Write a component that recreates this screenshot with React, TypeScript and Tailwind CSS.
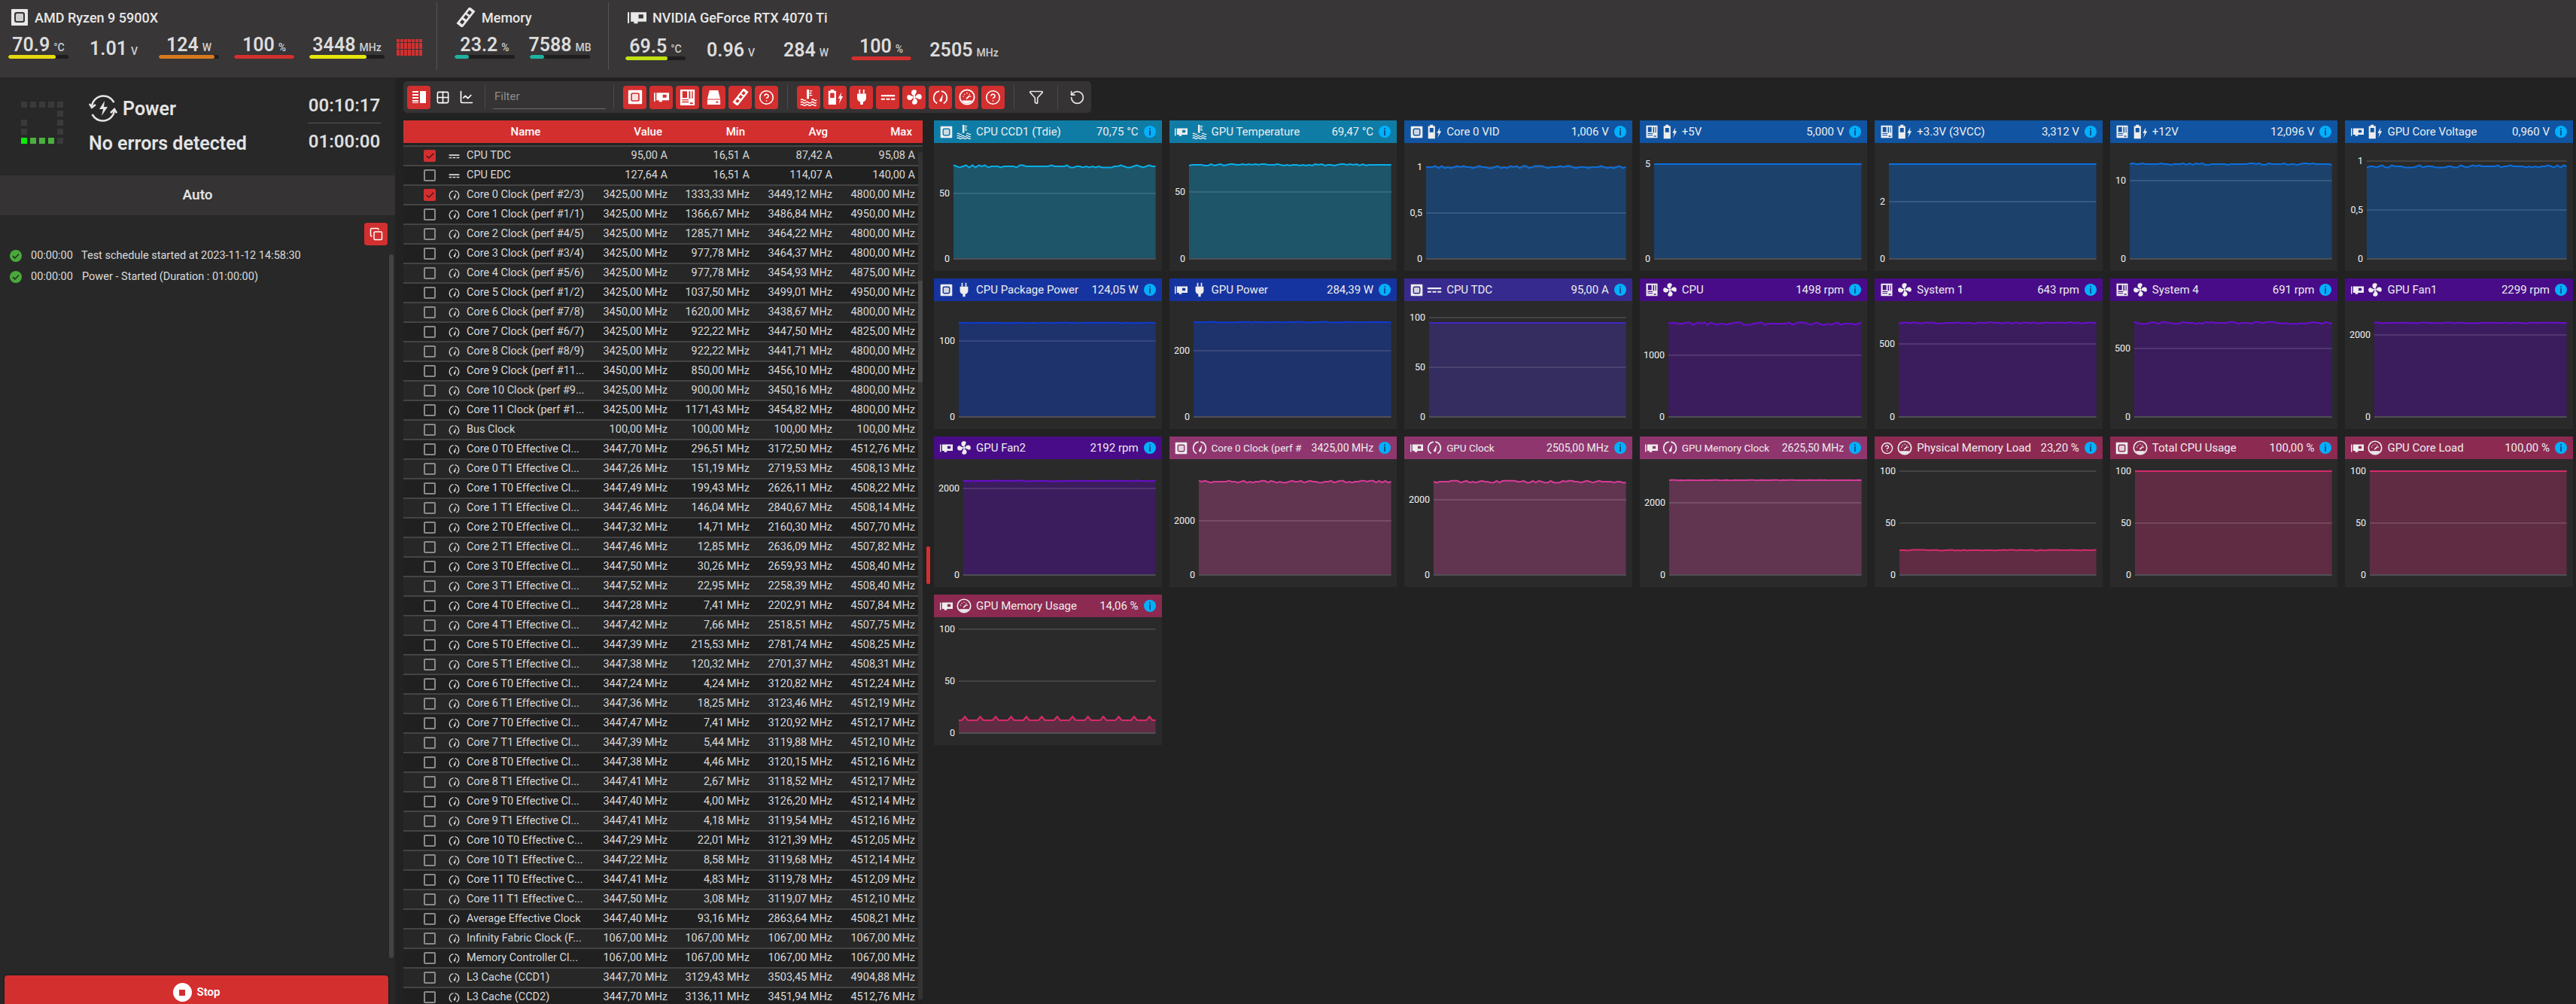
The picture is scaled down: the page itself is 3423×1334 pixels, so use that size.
import { Check, ChartLine, CircleHelp, Copy, Filter, Grid2x2, RotateCcw } from "lucide-react";

type IconProps = { size?: number; className?: string };

function CpuIcon({ size = 16, className }: IconProps) {
  return (
    <svg viewBox="0 0 24 24" width={size} height={size} className={className} fill="currentColor">
      <path fillRule="evenodd" d="M2 1h20a1 1 0 0 1 1 1v20a1 1 0 0 1-1 1H2a1 1 0 0 1-1-1V2a1 1 0 0 1 1-1zM8 5h8a3 3 0 0 1 3 3v8a3 3 0 0 1-3 3H8a3 3 0 0 1-3-3V8a3 3 0 0 1 3-3z" />
      <rect x="7" y="7" width="10" height="10" rx="1.5" opacity="0.85" />
    </svg>
  );
}

function GpuIcon({ size = 16, className }: IconProps) {
  return (
    <svg viewBox="0 0 24 24" width={size} height={size} className={className} fill="currentColor">
      <rect x="0" y="5" width="2" height="14" />
      <path fillRule="evenodd" d="M4 5h20v12h-11v2.500h-5v-2.500h-4zM14 8v5h6v-5z" />
    </svg>
  );
}

function MoboIcon({ size = 16, className }: IconProps) {
  return (
    <svg viewBox="0 0 24 24" width={size} height={size} className={className} fill="currentColor">
      <path fillRule="evenodd" d="M2 1h20v22H2zM5 3.500v9h6.500v-9zM14 3.500v10h2v-10zM18 3.500v10h1.500v-10zM4.500 14.500v1.500h9v-1.500zM4.500 17.500v1.500h9v-1.500zM15.500 19v2h4v-2z" />
    </svg>
  );
}

function DriveIcon({ size = 16, className }: IconProps) {
  return (
    <svg viewBox="0 0 24 24" width={size} height={size} className={className} fill="currentColor">
      <path d="M6 2h12l3 12H3z" />
      <path fillRule="evenodd" d="M3 15h18v7H3zM15 17.500v2h3v-2z" />
    </svg>
  );
}

function RamIcon({ size = 16, className }: IconProps) {
  return (
    <svg viewBox="0 0 24 24" width={size} height={size} className={className} fill="currentColor">
      <g transform="rotate(38 12 12)">
        <path fillRule="evenodd" d="M7.500-1h9v26h-9zM10 2.500v4.500h4v-4.500zM10 9.500v4.500h4v-4.500zM10 17v4.500h4V17z" />
      </g>
    </svg>
  );
}

function ThermoIcon({ size = 20, className }: IconProps) {
  return (
    <svg viewBox="0 0 24 24" width={size} height={size} className={className} fill="none" stroke="currentColor">
      <path d="M11 1v13" strokeWidth="3" />
      <path d="M13 3h4M13 6h3M13 9h4" strokeWidth="1.500" />
      <path d="M1 15.500q1.800-1.800 3.600 0t3.600 0M15.800 15.500q1.800-1.800 3.600 0t3.600 0" strokeWidth="1.500" />
      <path d="M1 19q1.800-1.800 3.600 0t3.600 0 3.600 0 3.600 0 3.600 0 3.600 0M1 22.500q1.800-1.800 3.600 0t3.600 0 3.600 0 3.600 0 3.600 0 3.600 0" strokeWidth="1.500" />
    </svg>
  );
}

function BatteryBoltIcon({ size = 20, className }: IconProps) {
  return (
    <svg viewBox="0 0 24 24" width={size} height={size} className={className} fill="currentColor">
      <path fillRule="evenodd" d="M5 1h5v2h3v20H2V3h3zM4.500 6v7h6V6z" />
      <path d="M21 5l-5 9h3l-2 8 6-11h-3z" />
    </svg>
  );
}

function PlugIcon({ size = 20, className }: IconProps) {
  return (
    <svg viewBox="0 0 24 24" width={size} height={size} className={className} fill="currentColor">
      <path d="M8 1h2v6H8zM14 1h2v6h-2z" />
      <path d="M5.500 7h13v7a6 6 0 0 1-4.500 5v4h-4v-4a6 6 0 0 1-4.500-5z" />
    </svg>
  );
}

function DcIcon({ size = 20, className }: IconProps) {
  return (
    <svg viewBox="0 0 24 24" width={size} height={size} className={className} fill="currentColor">
      <path d="M1 8.500h22v2.500H1zM1 14h6v2.500H1zM9 14h6v2.500H9zM17 14h6v2.500h-6z" />
    </svg>
  );
}

function FanIcon({ size = 20, className }: IconProps) {
  return (
    <svg viewBox="0 0 24 24" width={size} height={size} className={className} fill="currentColor">
      {[0, 90, 180, 270].map((deg) => (
        <path key={deg} transform={`rotate(${deg} 12 12)`} d="M11.500 10c-3-.5-4.500-3.500-3.500-6.500 1-2.500 6-3 7-.5s-1.500 3.500-2 7z" />
      ))}
      <circle cx="12" cy="12" r="2" />
    </svg>
  );
}

function ClockIcon({ size = 20, className }: IconProps) {
  return (
    <svg viewBox="0 0 24 24" width={size} height={size} className={className} fill="none" stroke="currentColor">
      <path d="M7 21a10 10 0 0 1 3.500-18.500M13.500 2.500A10 10 0 0 1 17 21" strokeWidth="2" />
      <path d="M10.500 16.500L16 7l-1.500 10.500a2.200 2.200 0 0 1-4-1z" fill="currentColor" stroke="none" />
    </svg>
  );
}

function LoadIcon({ size = 20, className }: IconProps) {
  return (
    <svg viewBox="0 0 24 24" width={size} height={size} className={className} fill="none" stroke="currentColor">
      <circle cx="12" cy="12" r="10.500" strokeWidth="2" />
      <path d="M4.500 17h15a8.500 8.500 0 0 1-15 0z" fill="currentColor" stroke="none" />
      <path d="M6 11h1.500M8 7.500l1 1M12 5.500v1.500M16 7.500l-1 1M16.500 11H18" strokeWidth="1.500" />
      <path d="M11 14.500L16 10" strokeWidth="2" />
    </svg>
  );
}

function InfoDot() {
  return (
    <svg viewBox="0 0 16 16" width={16} height={16} className="shrink-0">
      <circle cx="8" cy="8" r="8" fill="#03b0fb" />
      <rect x="7.100" y="3" width="1.800" height="1.800" fill="#0b4a8a" />
      <rect x="7.100" y="6" width="1.800" height="7" fill="#0b4a8a" />
    </svg>
  );
}

function CycleBoltIcon() {
  return (
    <svg viewBox="0 0 38 38" width={38} height={38} fill="none" stroke="#e4e4e4" strokeWidth="2.500" className="shrink-0">
      <path d="M4 18C4 9 11 2.500 19.500 2.500c6 0 11 3.500 14 8.500" />
      <path d="M34 20c0 9-7 15.500-15.500 15.500-6 0-11-3.500-14-8.500" />
      <path d="M1 13l3 5 5-4M29 25l5-5 3 5" />
      <path d="M21 9l-7 11h5l-2 9 8-12h-5z" fill="#e4e4e4" stroke="none" />
    </svg>
  );
}

function PanelsIcon() {
  return (
    <svg viewBox="0 0 20 20" width={20} height={20} fill="#fff">
      <path d="M1 2h8v2H1zM1 6h8v2H1zM1 10h8v2H1zM1 14h8v2H1zM1 18h8v-1H1zM11 2h8v16h-8z" />
    </svg>
  );
}

function StatusOk() {
  return (
    <svg viewBox="0 0 16 16" width={16} height={16} className="shrink-0">
      <circle cx="8" cy="8" r="8" fill="#4aa83c" />
      <path d="M4 8.200l2.800 2.800L12 5.500" fill="none" stroke="#26381f" strokeWidth="1.800" />
    </svg>
  );
}

const RED = "bg-[#d32f2f]";

function Metric({ value, unit, wide, fill, color }: { value: string; unit: string; wide?: boolean; fill?: number; color?: string }) {
  return (
    <div className={wide ? "w-[100px]" : "w-[80px]"}>
      <div className="flex items-baseline justify-center gap-[5px] h-[27px]">
        <span className="text-[25px] leading-[27px] font-semibold text-[#dcdcdc]">{value}</span>
        <span className="text-[14px] leading-[27px] font-medium text-[#cfcfcf]">{unit}</span>
      </div>
      {color ? (
        <div className="h-[5px] rounded-[3px] bg-[#1e1e1e] overflow-hidden">
          <div className={`h-full rounded-[3px] ${color}`} style={{ width: `${fill}%` }} />
        </div>
      ) : null}
    </div>
  );
}

function TopBar() {
  return (
    <div className="flex h-[103px] shrink-0 bg-[#383637]">
      {/* cpu */}
      <div className="w-[580px] shrink-0 pl-[11px] pt-[11px]">
        <div className="flex items-center h-[24px] pl-[3px] gap-[8px] text-[#e8e8e8]">
          <CpuIcon size={24} />
          <span className="text-[18px] font-medium whitespace-nowrap">AMD Ryzen 9 5900X</span>
        </div>
        <div className="flex items-end gap-[20px] mt-[11px]">
          <Metric value="70.9" unit="°C" fill={79} color="bg-[#e6d90f]" />
          <Metric value="1.01" unit="V" />
          <Metric value="124" unit="W" fill={92} color="bg-[#d67a1f]" />
          <Metric value="100" unit="%" fill={100} color={RED} />
          <Metric value="3448" unit="MHz" wide fill={76} color="bg-[#e6e60a]" />
          <div className="grid grid-cols-[repeat(7,4px)] gap-x-px gap-y-[0.5px] ml-[-4px] mb-[4px]">
            {Array.from({ length: 35 }).map((_, i) => (
              <div key={i} className={`h-[4px] w-[4px] ${RED}`} />
            ))}
          </div>
        </div>
      </div>
      <div className="w-px h-[90px] mt-[3px] bg-[#565456]" />
      {/* memory */}
      <div className="w-[227px] shrink-0 pl-[23px] pt-[9px]">
        <div className="flex items-center h-[28px] pl-[2px] gap-[8px] text-[#e8e8e8]">
          <RamIcon size={26} />
          <span className="text-[18px] font-medium whitespace-nowrap">Memory</span>
        </div>
        <div className="flex items-end gap-[20px] mt-[9px]">
          <Metric value="23.2" unit="%" fill={24} color="bg-[#20b2a0]" />
          <Metric value="7588" unit="MB" fill={24} color="bg-[#20b2a0]" />
        </div>
      </div>
      <div className="w-px h-[90px] mt-[3px] bg-[#565456]" />
      {/* gpu */}
      <div className="pl-[22px] pt-[11px]">
        <div className="flex items-center h-[24px] pl-[3px] gap-[8px] text-[#e8e8e8]">
          <GpuIcon size={25} />
          <span className="text-[18px] font-medium whitespace-nowrap">NVIDIA GeForce RTX 4070 Ti</span>
        </div>
        <div className="flex items-end gap-[20px] mt-[13px]">
          <Metric value="69.5" unit="°C" fill={70} color="bg-[#c3e013]" />
          <Metric value="0.96" unit="V" />
          <Metric value="284" unit="W" />
          <Metric value="100" unit="%" fill={100} color={RED} />
          <Metric value="2505" unit="MHz" wide />
        </div>
      </div>
    </div>
  );
}

function LoaderGrid() {
  // ring of cells; the bottom row is the finished part
  const cells = [
    "g", "g", "g", "g", "g",
    "", "", "", "", "g",
    "g", "", "", "", "g",
    "g", "", "", "", "g",
    "b", "l", "l", "l", "g",
  ];
  return (
    <div className="grid grid-cols-[repeat(5,8px)] gap-x-[4px] gap-y-[4px] mt-[32px] h-[56px] shrink-0">
      {cells.map((c, i) => (
        <div
          key={i}
          className={`h-[8px] w-[8px] ${c === "g" ? "bg-[#3a3a3a]" : c === "b" ? "bg-[#0bee0b]" : c === "l" ? "bg-[#4caf3f]" : ""}`}
        />
      ))}
    </div>
  );
}

function LeftPanel() {
  return (
    <div className="flex flex-col w-[525px] shrink-0 bg-[#282828] overflow-hidden">
      <div className="flex h-[130px] shrink-0 pl-[28px]">
        <LoaderGrid />
        <div className="ml-[34px] w-[230px] shrink-0">
          <div className="flex items-center gap-[7px] mt-[22px] h-[38px]">
            <CycleBoltIcon />
            <span className="text-[25px] font-semibold text-[#e4e4e4] leading-none">Power</span>
          </div>
          <div className="text-[25px] font-semibold text-[#e4e4e4] leading-none mt-[15px] whitespace-nowrap">No errors detected</div>
        </div>
        <div className="w-[97px] ml-[61px] shrink-0 text-center text-[24px] font-semibold text-[#dedede] leading-none">
          <div className="mt-[25px] pb-[11px] border-b border-[#555]">00:10:17</div>
          <div className="mt-[12px]">01:00:00</div>
        </div>
      </div>
      <div className="flex items-center justify-center h-[53px] shrink-0 bg-[#353334] text-[19px] font-semibold text-[#e2e2e2]">Auto</div>
      <div className="relative flex-1 flex flex-col">
        <div className="flex justify-end pt-[10px] pr-[10px]">
          <button className={`flex items-center justify-center w-[31px] h-[30px] rounded-[4px] ${RED} text-white`}>
            <Copy size={18} />
          </button>
        </div>
        <div className="pl-[13px] text-[14.500px] text-[#dadada]">
          <div className="flex items-center h-[28px]">
            <StatusOk />
            <span className="ml-[12px] w-[67px]">00:00:00</span>
            <span className="whitespace-nowrap">Test schedule started at 2023-11-12 14:58:30</span>
          </div>
          <div className="flex items-center h-[28px]">
            <StatusOk />
            <span className="ml-[12px] w-[68px]">00:00:00</span>
            <span className="whitespace-nowrap">Power - Started (Duration : 01:00:00)</span>
          </div>
        </div>
        <div className="absolute right-[2px] top-[52px] w-[6px] h-[935px] rounded-[3px] bg-[#444]" />
        <div className="mt-auto mx-[6px] w-[510px] h-[38px] rounded-t-[4px] bg-[#d32f2f] flex items-start justify-center gap-[7px] pt-[10px] shadow-[0_0_3px_#111]">
          <div className="flex items-center justify-center w-[25px] h-[25px] rounded-full bg-white">
            <div className={`w-[8px] h-[8px] ${RED}`} />
          </div>
          <span className="text-[15px] font-semibold text-white leading-[25px]">Stop</span>
        </div>
      </div>
    </div>
  );
}

function RedBtn({ children }: { children: React.ReactNode }) {
  return <div className={`flex items-center justify-center w-[31px] h-[31px] rounded-[4px] ${RED} text-white shrink-0`}>{children}</div>;
}

function Sep({ className }: { className: string }) {
  return <div className={`w-px h-[32px] bg-[#4c4a4b] shrink-0 ${className}`} />;
}

function Toolbar() {
  return (
    <div className="flex items-center w-[914px] h-[42px] mt-[5px] shrink-0 rounded-[5px] bg-[#353334] pl-[5px]">
      <RedBtn><PanelsIcon /></RedBtn>
      <div className="flex items-center justify-center w-[31px] text-white ml-px"><Grid2x2 size={19} /></div>
      <div className="flex items-center justify-center w-[31px] text-white"><ChartLine size={20} /></div>
      <Sep className="ml-[9px]" />
      <div className="ml-[10px] w-[150px] h-[31px] border-b border-[#6a6a6a] pl-[2px] text-[15px] leading-[29px] text-[#8d8d8d]">Filter</div>
      <Sep className="ml-[10px]" />
      <div className="flex gap-[4px] ml-[12px]">
        <RedBtn><CpuIcon size={20} /></RedBtn>
        <RedBtn><GpuIcon size={20} /></RedBtn>
        <RedBtn><MoboIcon size={23} /></RedBtn>
        <RedBtn><DriveIcon size={23} /></RedBtn>
        <RedBtn><RamIcon size={22} /></RedBtn>
        <RedBtn><CircleHelp size={21} strokeWidth={1.8} /></RedBtn>
      </div>
      <Sep className="ml-[12px]" />
      <div className="flex gap-[4px] ml-[12px]">
        <RedBtn><ThermoIcon size={23} /></RedBtn>
        <RedBtn><BatteryBoltIcon size={22} /></RedBtn>
        <RedBtn><PlugIcon size={22} /></RedBtn>
        <RedBtn><DcIcon size={20} /></RedBtn>
        <RedBtn><FanIcon size={22} /></RedBtn>
        <RedBtn><ClockIcon size={21} /></RedBtn>
        <RedBtn><LoadIcon size={22} /></RedBtn>
        <RedBtn><CircleHelp size={21} strokeWidth={1.8} /></RedBtn>
      </div>
      <Sep className="ml-[12px]" />
      <div className="flex items-center justify-center w-[31px] ml-[13px] text-[#e4e4e4]"><Filter size={20} /></div>
      <Sep className="ml-[13px]" />
      <div className="flex items-center justify-center w-[31px] ml-[10px] text-[#e4e4e4]"><RotateCcw size={21} /></div>
    </div>
  );
}

type Row = [string, string, string, string, string];

const AMP_ROWS: Row[] = [
  ["CPU TDC", "95,00 A", "16,51 A", "87,42 A", "95,08 A"],
  ["CPU EDC", "127,64 A", "16,51 A", "114,07 A", "140,00 A"],
];

const MHZ_ROWS: string[][] = [
  ["Core 0 Clock (perf #2/3)", "3425,00", "1333,33", "3449,12", "4800,00"],
  ["Core 1 Clock (perf #1/1)", "3425,00", "1366,67", "3486,84", "4950,00"],
  ["Core 2 Clock (perf #4/5)", "3425,00", "1285,71", "3464,22", "4800,00"],
  ["Core 3 Clock (perf #3/4)", "3425,00", "977,78", "3464,37", "4800,00"],
  ["Core 4 Clock (perf #5/6)", "3425,00", "977,78", "3454,93", "4875,00"],
  ["Core 5 Clock (perf #1/2)", "3425,00", "1037,50", "3499,01", "4950,00"],
  ["Core 6 Clock (perf #7/8)", "3450,00", "1620,00", "3438,67", "4800,00"],
  ["Core 7 Clock (perf #6/7)", "3425,00", "922,22", "3447,50", "4825,00"],
  ["Core 8 Clock (perf #8/9)", "3425,00", "922,22", "3441,71", "4800,00"],
  ["Core 9 Clock (perf #11...", "3450,00", "850,00", "3456,10", "4800,00"],
  ["Core 10 Clock (perf #9...", "3425,00", "900,00", "3450,16", "4800,00"],
  ["Core 11 Clock (perf #1...", "3425,00", "1171,43", "3454,82", "4800,00"],
  ["Bus Clock", "100,00", "100,00", "100,00", "100,00"],
  ["Core 0 T0 Effective Cl...", "3447,70", "296,51", "3172,50", "4512,76"],
  ["Core 0 T1 Effective Cl...", "3447,26", "151,19", "2719,53", "4508,13"],
  ["Core 1 T0 Effective Cl...", "3447,49", "199,43", "2626,11", "4508,22"],
  ["Core 1 T1 Effective Cl...", "3447,46", "146,04", "2840,67", "4508,14"],
  ["Core 2 T0 Effective Cl...", "3447,32", "14,71", "2160,30", "4507,70"],
  ["Core 2 T1 Effective Cl...", "3447,46", "12,85", "2636,09", "4507,82"],
  ["Core 3 T0 Effective Cl...", "3447,50", "30,26", "2659,93", "4508,40"],
  ["Core 3 T1 Effective Cl...", "3447,52", "22,95", "2258,39", "4508,40"],
  ["Core 4 T0 Effective Cl...", "3447,28", "7,41", "2202,91", "4507,84"],
  ["Core 4 T1 Effective Cl...", "3447,42", "7,66", "2518,51", "4507,75"],
  ["Core 5 T0 Effective Cl...", "3447,39", "215,53", "2781,74", "4508,25"],
  ["Core 5 T1 Effective Cl...", "3447,38", "120,32", "2701,37", "4508,31"],
  ["Core 6 T0 Effective Cl...", "3447,24", "4,24", "3120,82", "4512,24"],
  ["Core 6 T1 Effective Cl...", "3447,36", "18,25", "3123,46", "4512,19"],
  ["Core 7 T0 Effective Cl...", "3447,47", "7,41", "3120,92", "4512,17"],
  ["Core 7 T1 Effective Cl...", "3447,39", "5,44", "3119,88", "4512,10"],
  ["Core 8 T0 Effective Cl...", "3447,38", "4,46", "3120,15", "4512,16"],
  ["Core 8 T1 Effective Cl...", "3447,41", "2,67", "3118,52", "4512,17"],
  ["Core 9 T0 Effective Cl...", "3447,40", "4,00", "3126,20", "4512,14"],
  ["Core 9 T1 Effective Cl...", "3447,41", "4,18", "3119,54", "4512,16"],
  ["Core 10 T0 Effective C...", "3447,29", "22,01", "3121,39", "4512,05"],
  ["Core 10 T1 Effective C...", "3447,22", "8,58", "3119,68", "4512,14"],
  ["Core 11 T0 Effective C...", "3447,41", "4,83", "3119,78", "4512,09"],
  ["Core 11 T1 Effective C...", "3447,50", "3,08", "3119,07", "4512,10"],
  ["Average Effective Clock", "3447,40", "93,16", "2863,64", "4508,21"],
  ["Infinity Fabric Clock (F...", "1067,00", "1067,00", "1067,00", "1067,00"],
  ["Memory Controller Cl...", "1067,00", "1067,00", "1067,00", "1067,00"],
  ["L3 Cache (CCD1)", "3447,70", "3129,43", "3503,45", "4904,88"],
  ["L3 Cache (CCD2)", "3447,70", "3136,11", "3451,94", "4512,76"],
];

const COLS = "grid grid-cols-[241px_110px_109px_110px_110px]";

function SensorRow({ row, index, dc, checked }: { row: Row; index: number; dc: boolean; checked: boolean }) {
  return (
    <div className={`${COLS} h-[26px] shrink-0 items-center border-b-2 border-[#444] text-[14.500px] text-[#d8d8d8] ${index % 2 ? "bg-[#202020]" : "bg-[#272727]"}`}>
      <div className="flex items-center pl-[27px] whitespace-nowrap overflow-hidden">
        {checked ? (
          <div className={`flex items-center justify-center w-[16px] h-[16px] rounded-[2px] ${RED} shrink-0`}>
            <Check size={13} strokeWidth={2} className="text-[#2a1010]" />
          </div>
        ) : (
          <div className="w-[16px] h-[16px] rounded-[2px] border-2 border-[#8a8a8a] shrink-0" />
        )}
        <div className="flex justify-center w-[16px] ml-[16px] mr-[9px] text-[#dadada] shrink-0">
          {dc ? <DcIcon size={15} /> : <ClockIcon size={15} />}
        </div>
        <span>{row[0]}</span>
      </div>
      <div className="text-right whitespace-nowrap">{row[1]}</div>
      <div className="text-right whitespace-nowrap">{row[2]}</div>
      <div className="text-right whitespace-nowrap">{row[3]}</div>
      <div className="text-right whitespace-nowrap">{row[4]}</div>
    </div>
  );
}

function SensorTable() {
  const rows: Row[] = [
    ...AMP_ROWS,
    ...MHZ_ROWS.map((r) => [r[0], `${r[1]} MHz`, `${r[2]} MHz`, `${r[3]} MHz`, `${r[4]} MHz`] as Row),
  ];
  return (
    <div className="relative flex flex-col w-[690px] shrink-0 h-full overflow-hidden">
      <div className={`${COLS} h-[30px] shrink-0 items-center ${RED} text-[15px] font-medium text-white`}>
        <div className="text-center pl-[84px]">Name</div>
        <div className="text-right pr-[7px]">Value</div>
        <div className="text-right pr-[6px]">Min</div>
        <div className="text-right pr-[6px]">Avg</div>
        <div className="text-right pr-[4px]">Max</div>
      </div>
      <div className="mt-[3px] border-t-2 border-[#444] flex flex-col">
        {rows.map((row, i) => (
          <SensorRow key={row[0]} row={row} index={i} dc={i < 2} checked={i === 0 || i === 2} />
        ))}
      </div>
      <div className="absolute right-0 top-[42px] bottom-[6px] w-[6px] rounded-t-[3px] bg-[#333]" />
      <div className="absolute right-0 top-[213px] h-[135px] w-[6px] bg-[#484848]" />
    </div>
  );
}

type Kind = "temp" | "volt" | "power" | "amp" | "fan" | "clock" | "load";

const HEAD: Record<Kind, string> = {
  temp: "bg-[#0f7ca6]",
  volt: "bg-[#1054a2]",
  power: "bg-[#1634a0]",
  amp: "bg-[#372a8f]",
  fan: "bg-[#480c88]",
  clock: "bg-[#90366f]",
  load: "bg-[#8d2a52]",
};

const PLOT: Record<Kind, { fill: string; stroke: string; tick: string }> = {
  temp: { fill: "#1e5568", stroke: "#07aeea", tick: "#3f7081" },
  volt: { fill: "#1c426b", stroke: "#0a6fe0", tick: "#3f6088" },
  power: { fill: "#1e326b", stroke: "#0c3bd8", tick: "#434f82" },
  amp: { fill: "#352c5f", stroke: "#4426c2", tick: "#544c76" },
  fan: { fill: "#3b1d5e", stroke: "#6a0cd0", tick: "#5a4076" },
  clock: { fill: "#613450", stroke: "#d83a98", tick: "#7e566f" },
  load: { fill: "#5f2c44", stroke: "#d82a6a", tick: "#7a5063" },
};

type ChartDef = {
  title: string;
  value: string;
  kind: Kind;
  dev: "cpu" | "gpu" | "mobo" | "other";
  left: number;
  top: number;
  amp: number;
  ticks: [string, number][];
  spiky?: boolean;
};

const CHARTS: ChartDef[] = [
  { title: "CPU CCD1 (Tdie)", value: "70,75 °C", kind: "temp", dev: "cpu", left: 26, top: 31, amp: 1.5, ticks: [["50", 67]] },
  { title: "GPU Temperature", value: "69,47 °C", kind: "temp", dev: "gpu", left: 26, top: 29, amp: 1, ticks: [["50", 65]] },
  { title: "Core 0 VID", value: "1,006 V", kind: "volt", dev: "cpu", left: 29, top: 32, amp: 1.5, ticks: [["1", 32], ["0,5", 93]] },
  { title: "+5V", value: "5,000 V", kind: "volt", dev: "mobo", left: 19, top: 28, amp: 0, ticks: [["5", 28]] },
  { title: "+3.3V (3VCC)", value: "3,312 V", kind: "volt", dev: "mobo", left: 19, top: 28, amp: 0, ticks: [["2", 78]] },
  { title: "+12V", value: "12,096 V", kind: "volt", dev: "mobo", left: 26, top: 28, amp: 1, ticks: [["10", 50]] },
  { title: "GPU Core Voltage", value: "0,960 V", kind: "volt", dev: "gpu", left: 29, top: 31, amp: 1.5, ticks: [["1", 24], ["0,5", 89]] },
  { title: "CPU Package Power", value: "124,05 W", kind: "power", dev: "cpu", left: 33, top: 29, amp: 0.6, ticks: [["100", 53]] },
  { title: "GPU Power", value: "284,39 W", kind: "power", dev: "gpu", left: 32, top: 28, amp: 0.6, ticks: [["200", 66]] },
  { title: "CPU TDC", value: "95,00 A", kind: "amp", dev: "cpu", left: 33, top: 29, amp: 0, ticks: [["100", 22], ["50", 88]] },
  { title: "CPU", value: "1498 rpm", kind: "fan", dev: "mobo", left: 38, top: 30, amp: 1.500, ticks: [["1000", 72]] },
  { title: "System 1", value: "643 rpm", kind: "fan", dev: "mobo", left: 32, top: 29, amp: 0.8, ticks: [["500", 57]] },
  { title: "System 4", value: "691 rpm", kind: "fan", dev: "mobo", left: 32, top: 29, amp: 1.2, ticks: [["500", 63]] },
  { title: "GPU Fan1", value: "2299 rpm", kind: "fan", dev: "gpu", left: 39, top: 29, amp: 0.5, ticks: [["2000", 45]] },
  { title: "GPU Fan2", value: "2192 rpm", kind: "fan", dev: "gpu", left: 39, top: 29, amp: 0.5, ticks: [["2000", 39]] },
  { title: "Core 0 Clock (perf #", value: "3425,00 MHz", kind: "clock", dev: "cpu", left: 39, top: 30, amp: 1.2, ticks: [["2000", 82]] },
  { title: "GPU Clock", value: "2505,00 MHz", kind: "clock", dev: "gpu", left: 39, top: 30, amp: 1.2, ticks: [["2000", 54]] },
  { title: "GPU Memory Clock", value: "2625,50 MHz", kind: "clock", dev: "gpu", left: 39, top: 28, amp: 0.2, ticks: [["2000", 58]] },
  { title: "Physical Memory Load", value: "23,20 %", kind: "load", dev: "other", left: 33, top: 121, amp: 0.5, ticks: [["100", 16], ["50", 85]] },
  { title: "Total CPU Usage", value: "100,00 %", kind: "load", dev: "cpu", left: 33, top: 16, amp: 0, ticks: [["100", 16], ["50", 85]] },
  { title: "GPU Core Load", value: "100,00 %", kind: "load", dev: "gpu", left: 33, top: 16, amp: 0, ticks: [["100", 16], ["50", 85]] },
  { title: "GPU Memory Usage", value: "14,06 %", kind: "load", dev: "gpu", left: 33, top: 137, amp: 0, ticks: [["100", 16], ["50", 85]], spiky: true },
];

const BASE_Y = 154;
const RIGHT = 295;

// stable noise so every render gives the same sparkline
function noise(seed: number, i: number) {
  const x = Math.sin(seed * 12.9898 + i * 78.233) * 43758.5453;
  return x - Math.floor(x);
}

function linePoints(c: ChartDef, seed: number) {
  const pts: [number, number][] = [];
  const step = (RIGHT - c.left) / 64;
  for (let i = 0; i <= 64; i++) {
    const r = noise(seed + 1, i);
    let y = c.top;
    if (c.spiky) y = i % 5 === 2 ? c.top - 5 : c.top;
    else if (r > 0.75) y = c.top - c.amp;
    else if (r < 0.25) y = c.top + c.amp;
    pts.push([c.left + i * step, y]);
  }
  return pts;
}

function DeviceIcon({ dev }: { dev: ChartDef["dev"] }) {
  if (dev === "cpu") return <CpuIcon size={17} />;
  if (dev === "gpu") return <GpuIcon size={17} />;
  if (dev === "mobo") return <MoboIcon size={18} />;
  return <CircleHelp size={17} strokeWidth={2} />;
}

function KindIcon({ kind }: { kind: Kind }) {
  if (kind === "temp") return <ThermoIcon size={20} />;
  if (kind === "volt") return <BatteryBoltIcon size={20} />;
  if (kind === "power") return <PlugIcon size={20} />;
  if (kind === "amp") return <DcIcon size={20} />;
  if (kind === "fan") return <FanIcon size={20} />;
  if (kind === "clock") return <ClockIcon size={20} />;
  return <LoadIcon size={20} />;
}

function ChartCard({ chart, seed }: { chart: ChartDef; seed: number }) {
  const colors = PLOT[chart.kind];
  const pts = linePoints(chart, seed);
  const line = pts.map((p) => p.join(",")).join(" ");
  const area = `${chart.left},${BASE_Y} ${line} ${RIGHT},${BASE_Y}`;
  return (
    <div className="h-[200px] bg-[#2a2a2a]">
      <div className={`flex items-center h-[30px] pl-[7px] pr-[8px] text-[#ededed] ${HEAD[chart.kind]}`}>
        <div className="flex justify-center w-[18px] shrink-0"><DeviceIcon dev={chart.dev} /></div>
        <div className="flex justify-center w-[22px] ml-[4px] shrink-0"><KindIcon kind={chart.kind} /></div>
        <span className={`ml-[5px] flex-1 whitespace-nowrap ${chart.kind === "clock" ? "text-[13.500px]" : "text-[15px]"}`}>{chart.title}</span>
        <span className={`whitespace-nowrap ${chart.kind === "clock" ? "text-[14px]" : "text-[15px]"}`}>{chart.value}</span>
        <span className="ml-[7px] shrink-0"><InfoDot /></span>
      </div>
      <svg viewBox="0 0 303 170" width="100%" height={170} preserveAspectRatio="none" className="block">
        <polygon points={area} fill={colors.fill} />
        <line x1={chart.left} x2={RIGHT} y1={BASE_Y} y2={BASE_Y} stroke="#4f4f55" strokeWidth="2" />
        {chart.ticks.map(([label, y]) => (
          <line key={label} x1={chart.left} x2={RIGHT} y1={y} y2={y} stroke={y > chart.top ? colors.tick : "#4d4d4d"} strokeWidth="1.500" />
        ))}
        <polyline points={line} fill="none" stroke={colors.stroke} strokeWidth="2" />
        {[...chart.ticks, ["0", BASE_Y] as [string, number]].map(([label, y]) => (
          <text key={label} x={chart.left - 5} y={y + 4.500} textAnchor="end" fontSize="12.500" fill="#f2f2f2" fontFamily="Roboto, sans-serif">
            {label}
          </text>
        ))}
      </svg>
    </div>
  );
}

export default function App() {
  return (
    <div className="flex flex-col h-screen w-screen overflow-hidden bg-[#222222] font-['Roboto',sans-serif]">
      <TopBar />
      <div className="flex flex-1 min-h-0">
        <LeftPanel />
        <div className="flex flex-col flex-1 min-w-0 pl-[11px]">
          <Toolbar />
          <div className="flex flex-1 min-h-0 mt-[10px]">
            <SensorTable />
            <div className={`w-[5px] h-[50px] mt-[566px] mx-[5px] rounded-[2px] shrink-0 ${RED}`} />
            <div className="grid grid-cols-7 gap-x-[10px] gap-y-[10px] content-start flex-1 min-w-0 pr-[4px]">
              {CHARTS.map((c, i) => (
                <ChartCard key={c.title} chart={c} seed={i} />
              ))}
            </div>
          </div>
        </div>
      </div>
    </div>
  );
}
